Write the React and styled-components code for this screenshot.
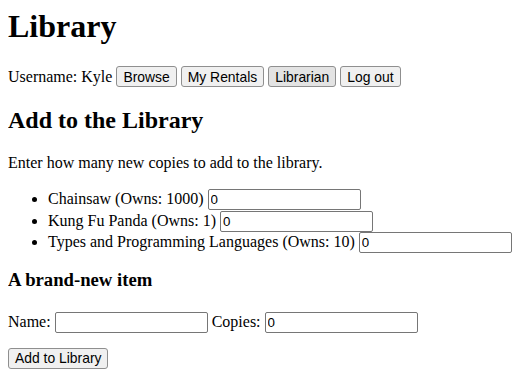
import React from 'react';
import styled, { createGlobalStyle } from 'styled-components';

const GlobalStyle = createGlobalStyle`
  body {
    margin: 8px;
    background: #fff;
    color: #000;
    font-family: 'Liberation Serif', 'Times New Roman', serif;
    font-size: 16px;
  }
`;

const Title = styled.h1`
  font-size: 32px;
  font-weight: bold;
  margin: 0 0 21px;
`;

const Heading = styled.h2`
  font-size: 24px;
  font-weight: bold;
  margin: 20px 0;
`;

const SubHeading = styled.h3`
  font-size: 18.7px;
  font-weight: bold;
  margin: 16px 0 21px;
`;

const Para = styled.p`
  margin: ${(p) => (p.$tight ? '15px 0' : '16px 0')};
`;

const Button = styled.button`
  font-family: 'Liberation Sans', Arial, sans-serif;
  font-size: 13.9px;
  color: #000;
  background: ${(p) => (p.$active ? '#e3e3e3' : '#f0f0f0')};
  border: 1px solid #8f8f8f;
  border-radius: 3px;
  padding: 1px 6px;
  margin: 0;
  height: 21px;
  vertical-align: baseline;
`;

const Input = styled.input`
  font-family: 'Liberation Sans', Arial, sans-serif;
  font-size: 13.33px;
  width: 153px;
  height: 21px;
  box-sizing: border-box;
  border: 1px solid #767676;
  border-radius: 2px;
  padding: 1px 2px;
  margin: 0;
  vertical-align: baseline;
`;

const List = styled.ul`
  margin: 16px 0;
  padding-left: 40px;
  list-style: disc;
`;

const Item = styled.li`
  line-height: 21px;
  height: 21.5px;
`;

const items = [
  { name: 'Chainsaw', owns: 1000 },
  { name: 'Kung Fu Panda', owns: 1 },
  { name: 'Types and Programming Languages', owns: 10 },
];

export default function App() {
  return (
    <>
      <GlobalStyle />
      <Title>Library</Title>
      <Para>
        Username: Kyle <Button>Browse</Button> <Button>My Rentals</Button>{' '}
        <Button $active>Librarian</Button> <Button>Log out</Button>
      </Para>
      <Heading>Add to the Library</Heading>
      <Para>Enter how many new copies to add to the library.</Para>
      <List>
        {items.map((it) => (
          <Item key={it.name}>
            {it.name} (Owns: {it.owns}) <Input defaultValue="0" />
          </Item>
        ))}
      </List>
      <SubHeading>A brand-new item</SubHeading>
      <Para $tight>
        Name: <Input /> Copies: <Input defaultValue="0" />
      </Para>
      <Para $tight>
        <Button>Add to Library</Button>
      </Para>
    </>
  );
}
